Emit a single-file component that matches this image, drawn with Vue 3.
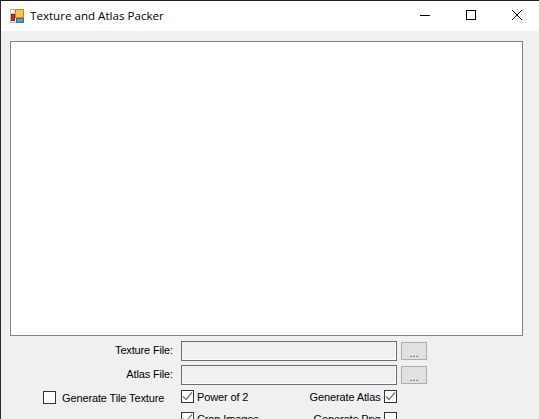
<script setup>
const files = ['Texture File:', 'Atlas File:']
</script>

<template>
  <div class="window">
    <header class="titlebar">
      <svg class="appicon" width="14" height="14" viewBox="0 0 14 14">
        <rect x="0.5" y="0.5" width="13" height="13" fill="#fff" stroke="#bdbdbd" />
        <path d="M0 4.5H14M0 9.5H14M4.5 0V14" stroke="#c8c8c8" fill="none" />
        <rect x="5.5" y="0.5" width="8" height="8" fill="#f3c84a" stroke="#b58d2e" />
        <rect x="1.5" y="5.5" width="3" height="6" fill="#c8332b" stroke="#7d2a25" />
        <rect x="6.5" y="9.5" width="7" height="4" fill="#5b97e0" stroke="#3a6aa8" />
      </svg>
      <span class="title">Texture and Atlas Packer</span>
      <div class="controls">
        <svg class="ctl" width="46" height="30" viewBox="0 0 46 30"><path d="M18 14.5H28" stroke="#000" /></svg>
        <svg class="ctl" width="46" height="30" viewBox="0 0 46 30"><rect x="18.5" y="9.5" width="9" height="9" fill="none" stroke="#000" /></svg>
        <svg class="ctl" width="46" height="30" viewBox="0 0 46 30"><path d="M18 9L28 19M28 9L18 19" stroke="#000" fill="none" /></svg>
      </div>
    </header>
    <main class="client">
      <div class="canvas"></div>
      <div class="files">
        <div v-for="f in files" :key="f" class="filerow">
          <label class="filelabel">{{ f }}</label>
          <div class="field"></div>
          <button class="browse">...</button>
        </div>
      </div>
      <div class="options">
        <label class="opt tile"><span class="box"></span>Generate Tile Texture</label>
        <div class="optcol">
          <label class="opt"><span class="box">
            <svg width="13" height="13" viewBox="0 0 13 13"><path d="M2 6.5L5 9.5L11 2.5" fill="none" stroke="#777" stroke-width="1.2" /></svg>
          </span>Power of 2</label>
          <label class="opt"><span class="box">
            <svg width="13" height="13" viewBox="0 0 13 13"><path d="M2 6.5L5 9.5L11 2.5" fill="none" stroke="#777" stroke-width="1.2" /></svg>
          </span>Crop Images</label>
        </div>
        <div class="optcol end">
          <label class="opt">Generate Atlas<span class="box right">
            <svg width="13" height="13" viewBox="0 0 13 13"><path d="M2 6.5L5 9.5L11 2.5" fill="none" stroke="#777" stroke-width="1.2" /></svg>
          </span></label>
          <label class="opt">Generate Png<span class="box right"></span></label>
        </div>
      </div>
    </main>
  </div>
</template>

<style scoped>
.window {
  width: 539px;
  height: 419px;
  overflow: hidden;
  box-sizing: border-box;
  background: #f0f0f0;
  border-top: 1px solid #1f1f1f;
  border-left: 1px solid #2b2b2b;
  font-family: "Liberation Sans", Arial, sans-serif;
  font-size: 11px;
  color: #000;
}
.titlebar {
  height: 30px;
  background: #fff;
  display: flex;
  align-items: center;
  padding-left: 9px;
}
.appicon { flex: none; margin-top: -1px; }
.title {
  margin-left: 6px;
  margin-top: -2px;
  font-family: "Open Sans", sans-serif;
  font-size: 11.6px;
}
.controls {
  margin-left: auto;
  display: flex;
  margin-right: -1px;
}
.ctl { display: block; }
.client {
  padding: 10px 16px 0 9px;
}
.canvas {
  height: 293px;
  background: #fff;
  border: 1px solid #82828c;
}
.files {
  margin-top: 5px;
  display: flex;
  flex-direction: column;
  gap: 4px;
}
.filerow {
  display: flex;
  align-items: center;
  height: 20px;
}
.filelabel {
  width: 163px;
  padding-bottom: 2px;
  text-align: right;
  letter-spacing: -0.15px;
}
.field {
  margin-left: 8px;
  width: 216px;
  height: 20px;
  box-sizing: border-box;
  border: 1px solid #6f6f6f;
  box-shadow: inset -1px -1px 0 #fff;
  background: #f0f0f0;
}
.browse {
  margin-left: 4px;
  width: 26px;
  height: 18px;
  padding: 3px 0 0;
  border: 1px solid #adadad;
  background: #e1e1e1;
  font: inherit;
  color: #444;
}
.options {
  margin-top: 5px;
  display: flex;
}
.tile {
  margin-left: 33px;
  width: 138px;
  margin-top: 1px;
  align-self: flex-start;
  letter-spacing: -0.13px;
}
.optcol {
  display: flex;
  flex-direction: column;
  gap: 9px;
  letter-spacing: -0.13px;
}
.optcol.end {
  margin-left: 27px;
  width: 111px;
  align-items: flex-end;
}
.opt {
  display: flex;
  align-items: center;
  white-space: nowrap;
  height: 13px;
}
.box {
  flex: none;
  box-sizing: border-box;
  width: 13px;
  height: 13px;
  margin-right: 3px;
  border: 1px solid #333;
  background: #fff;
}
.tile .box { margin-right: 6px; }
.box.right { margin: 0 0 0 3px; }
.box svg {
  display: block;
  margin: -1px;
}
</style>
